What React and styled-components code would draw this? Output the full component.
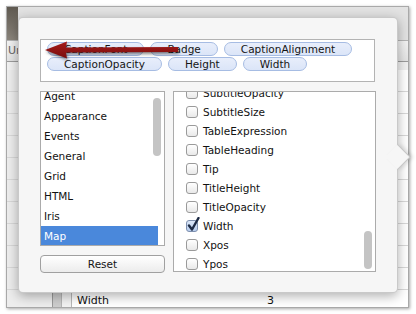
import React from "react";
import styled, { createGlobalStyle } from "styled-components";

const Global = createGlobalStyle`
  html, body { margin: 0; padding: 0; background: #ffffff; }
  body { width: 416px; height: 314px; overflow: hidden; font-family: "DejaVu Sans", "Liberation Sans", sans-serif; }
`;

const Page = styled.div`
  position: relative;
  width: 416px;
  height: 314px;
  box-sizing: border-box;
  padding: 6px 0 0 6px;
  background: #ffffff;
`;

const Frame = styled.div`
  width: 403px;
  height: 302px;
  box-sizing: border-box;
  border: 1px solid #a9a9a9;
  box-shadow: 1px 1px 3px rgba(0, 0, 0, 0.35);
  background: #efefef;
  display: flex;
  flex-direction: column;
  overflow: hidden;
`;

const TopBand = styled.div`
  height: 33px;
  display: flex;
  flex-shrink: 0;
`;

const DarkCorner = styled.div`
  width: 11px;
  background: linear-gradient(#5f5950, #8b857c);
`;

const TopRest = styled.div`
  flex: 1;
  background: #e2e2e2;
`;

const HeaderRow = styled.div`
  height: 22px;
  flex-shrink: 0;
  box-sizing: border-box;
  border-top: 1px solid #b4b4b4;
  border-bottom: 1px solid #9c9c9c;
  background: linear-gradient(#f3f3f3, #e3e3e3);
  font-size: 11px;
  line-height: 20px;
  color: #666;
  padding-left: 1px;
`;

const Spacer = styled.div`
  height: 8px;
  flex-shrink: 0;
  background: #f1f1f1;
`;

const TableRow = styled.div`
  height: 22px;
  flex-shrink: 0;
  display: flex;
  box-sizing: border-box;
  border-bottom: 1px solid #d8d8d8;
  background: #f4f4f4;
`;

const Gutter = styled.div`
  width: 45px;
  background: #ededed;
`;

const BarCol = styled.div`
  width: 10px;
  box-sizing: border-box;
  border-left: 1px solid #9a9a9a;
  border-right: 1px solid #b5b5b5;
  background: #cdcdcd;
`;

const GapCol = styled.div`
  width: 9px;
  background: #f2f2f2;
`;

const NameCell = styled.div`
  width: 160px;
  box-sizing: border-box;
  border-left: 1px solid #b8b8b8;
  background: #ffffff;
  padding-left: 5px;
  font-size: 11px;
  line-height: 21px;
  color: #111;
`;

const ValueCell = styled.div`
  flex: 1;
  background: #ffffff;
  padding-left: 36px;
  font-size: 11px;
  line-height: 21px;
  color: #111;
`;

const Popover = styled.div`
  position: absolute;
  left: 18px;
  top: 17px;
  width: 380px;
  height: 276px;
  box-sizing: border-box;
  padding: 21px 22px 20px 21px;
  background: #f6f6f6;
  border: 1px solid rgba(0, 0, 0, 0.18);
  border-radius: 5px;
  box-shadow: 0 3px 12px rgba(0, 0, 0, 0.32);
  display: flex;
  flex-direction: column;
  gap: 9px;
`;

const PopArrow = styled.div`
  position: absolute;
  right: -10px;
  top: 130px;
  width: 17px;
  height: 17px;
  background: #f6f6f6;
  border-top: 1px solid rgba(0, 0, 0, 0.2);
  border-right: 1px solid rgba(0, 0, 0, 0.2);
  transform: rotate(45deg);
  box-shadow: 2px -2px 4px rgba(0, 0, 0, 0.12);
`;

const TagBox = styled.div`
  flex-shrink: 0;
  width: 335px;
  height: 43px;
  box-sizing: border-box;
  border: 1px solid #b3b3b3;
  background: #ffffff;
  padding: 2px 6px;
  display: flex;
  flex-wrap: wrap;
  align-content: flex-start;
  column-gap: 6px;
  row-gap: 1px;
`;

const Pill = styled.div`
  height: 14px;
  box-sizing: border-box;
  border: 1px solid #a6bce3;
  border-radius: 7px;
  background: linear-gradient(#e8eefb, #dbe5f8);
  padding: 0 16px;
  font-size: 10.5px;
  line-height: 12px;
  color: #151515;
  white-space: nowrap;
`;

const ListsRow = styled.div`
  flex-shrink: 0;
  display: flex;
  gap: 8px;
`;

const LeftCol = styled.div`
  width: 125px;
  display: flex;
  flex-direction: column;
  gap: 9px;
`;

const ListBox = styled.div`
  position: relative;
  flex-shrink: 0;
  height: ${(p) => p.h}px;
  width: ${(p) => p.w}px;
  box-sizing: border-box;
  border: 1px solid #ababab;
  background: #ffffff;
  overflow: hidden;
`;

const ListInner = styled.div`
  margin-top: ${(p) => p.offset}px;
`;

const CatRow = styled.div`
  height: 20px;
  padding-left: 3px;
  margin-right: ${(p) => (p.selected ? 6 : 0)}px;
  font-size: 10.5px;
  line-height: 21px;
  color: ${(p) => (p.selected ? "#ffffff" : "#121212")};
  background: ${(p) => (p.selected ? "#4a88db" : "transparent")};
`;

const Thumb = styled.div`
  position: absolute;
  right: 3px;
  top: ${(p) => p.top}px;
  width: 8px;
  height: ${(p) => p.h}px;
  border-radius: 4px;
  background: #c4c4c4;
`;

const ResetButton = styled.button`
  flex-shrink: 0;
  height: 18px;
  width: 125px;
  box-sizing: border-box;
  border: 1px solid #a0a0a0;
  border-radius: 4px;
  background: linear-gradient(#ffffff, #ececec);
  font-family: "DejaVu Sans", sans-serif;
  font-size: 10.5px;
  color: #151515;
  padding: 0;
  line-height: 15px;
`;

const PropRow = styled.div`
  height: 19px;
  display: flex;
  align-items: center;
  padding-left: 12px;
  gap: 5px;
  font-size: 10.5px;
  color: #121212;
`;

const Check = styled.div`
  position: relative;
  width: 12px;
  height: 12px;
  box-sizing: border-box;
  border: 1px solid ${(p) => (p.checked ? "#7d8fae" : "#9a9a9a")};
  border-radius: 3px;
  background: ${(p) =>
    p.checked ? "linear-gradient(#dbe6f7, #b8cdee)" : "linear-gradient(#ffffff, #e9e9e9)"};
  flex-shrink: 0;
`;

const CheckMark = styled.svg`
  position: absolute;
  left: 0px;
  top: -4px;
`;

const Annotation = styled.svg`
  position: absolute;
  left: 0;
  top: 0;
  pointer-events: none;
  filter: drop-shadow(1px 2px 1.5px rgba(0, 0, 0, 0.45));
`;

const cats = ["Agent", "Appearance", "Events", "General", "Grid", "HTML", "Iris", "Map"];
const props = [
  ["SubtitleOpacity", false],
  ["SubtitleSize", false],
  ["TableExpression", false],
  ["TableHeading", false],
  ["Tip", false],
  ["TitleHeight", false],
  ["TitleOpacity", false],
  ["Width", true],
  ["Xpos", false],
  ["Ypos", false],
];
const tags = ["CaptionFont", "Badge", "CaptionAlignment", "CaptionOpacity", "Height", "Width"];
const rows = [
  ["", ""], ["", ""], ["", ""], ["", ""], ["", ""], ["", ""],
  ["", ""], ["", ""], ["", ""], ["Height", "1.00"], ["Width", "3"],
];

export default function App() {
  return (
    <Page>
      <Global />
      <Frame>
        <TopBand>
          <DarkCorner />
          <TopRest />
        </TopBand>
        <HeaderRow>Units</HeaderRow>
        <Spacer />
        {rows.map(([n, v], i) => (
          <TableRow key={i}>
            <Gutter />
            <BarCol />
            <GapCol />
            <NameCell>{n}</NameCell>
            <ValueCell>{v}</ValueCell>
          </TableRow>
        ))}
      </Frame>
      <Popover>
        <PopArrow />
        <TagBox>
          {tags.map((t) => (
            <Pill key={t}>{t}</Pill>
          ))}
        </TagBox>
        <ListsRow>
          <LeftCol>
            <ListBox w={125} h={155}>
              <ListInner offset={-6}>
                {cats.map((c) => (
                  <CatRow key={c} selected={c === "Map"}>{c}</CatRow>
                ))}
              </ListInner>
              <Thumb top={6} h={58} />
            </ListBox>
            <ResetButton>Reset</ResetButton>
          </LeftCol>
          <ListBox w={203} h={181}>
            <ListInner offset={-9}>
              {props.map(([p, c]) => (
                <PropRow key={p}>
                  <Check checked={c}>
                    {c && (
                      <CheckMark width="14" height="15" viewBox="0 0 14 15">
                        <path d="M2 8.5 L5 12.5 L11.5 1" fill="none" stroke="#1d2a44" strokeWidth="2.4" strokeLinecap="round" strokeLinejoin="round" />
                      </CheckMark>
                    )}
                  </Check>
                  {p}
                </PropRow>
              ))}
            </ListInner>
            <Thumb top={139} h={38} />
          </ListBox>
        </ListsRow>
      </Popover>
      <Annotation width="200" height="70" viewBox="0 0 200 70">
        <defs>
          <linearGradient id="red" x1="0" y1="0" x2="0" y2="1">
            <stop offset="0" stopColor="#a51c1c" />
            <stop offset="1" stopColor="#7a0c0c" />
          </linearGradient>
        </defs>
        <path d="M45 50 L67 41.5 L66 47.5 L178 47 L178 52 L66 52.5 L67 58.5 Z" fill="url(#red)" />
      </Annotation>
    </Page>
  );
}
